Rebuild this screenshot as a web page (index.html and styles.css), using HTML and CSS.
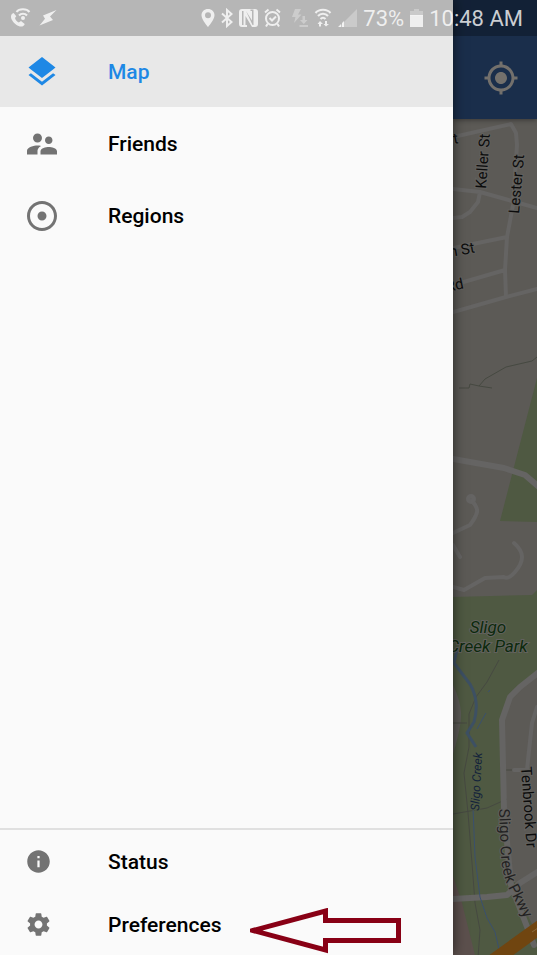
FILE: index.html
```html
<!DOCTYPE html>
<html lang="en">
<head>
<meta charset="utf-8">
<meta name="viewport" content="width=device-width, initial-scale=1">
<title>Map</title>
<link rel="stylesheet" href="styles.css">
</head>
<body>
<div class="app">
  <header class="status-bar">
    <div class="status-group">
      <svg class="icon-call" width="22" height="20" viewBox="0 0 22 20" aria-hidden="true">
        <path class="solid" d="M3.600 5C.8 6 .3 9 2 12c2.200 4 6 6.500 9 6.500 2 0 3.500-1.300 3.700-2.600L11 13l-2.200 1.500C7 13.500 5.500 12 5 10l1.300-1.800z"/>
        <path class="line w2" d="M6.500 4C9 .6 16.500.3 19.500 4M9 7.500c2-2.400 6-2.400 8 0"/>
        <circle class="solid" cx="13" cy="10" r="2"/>
      </svg>
      <svg width="18" height="18" viewBox="0 0 18 18" aria-hidden="true"><path class="solid" d="M17.500 1 4 6.500l2 3.200L.5 16.500 14 11l-3-3.500z"/></svg>
    </div>
    <div class="status-group compact">
      <svg width="14" height="20" viewBox="0 0 14 20" aria-hidden="true"><path class="solid" fill-rule="evenodd" d="M7 1C3.300 1 .5 3.700.5 7.300.5 12 7 19 7 19s6.500-7 6.500-11.700C13.500 3.700 10.700 1 7 1zm0 3.300a3 3 0 1 1 0 6 3 3 0 0 1 0-6z"/></svg>
      <svg width="12" height="20" viewBox="0 0 12 20" aria-hidden="true"><path class="line w2" d="m1 5.500 9.500 8.500L6 18V2l4.500 4L1 14.500"/></svg>
      <svg width="19" height="20" viewBox="0 0 19 20" aria-hidden="true"><path class="solid" fill-rule="evenodd" d="M3 1h13q3 0 3 3v12q0 3-3 3h-3L6.500 8v9H8v2H3q-3 0-3-3V4q0-3 3-3zm0 2v14h1.500V3zM7 3l6 9.500V3h-1.500V1.500h3V17h-1z"/></svg>
      <svg width="17" height="20" viewBox="0 0 17 20" aria-hidden="true"><circle class="line w2" cx="8.500" cy="10.500" r="6.500"/><path class="line w2" d="m1 4.500 3.500-3M16 4.500l-3.500-3M3.500 16 2 18.500M13.500 16l1.500 2.500M5.500 10l2.500 2.500L12 8.500"/></svg>
      <svg class="dim icon-flash" width="17" height="20" viewBox="0 0 17 20" aria-hidden="true"><path class="solid" d="M4 1h6L7 6.500h3.500L3 15l1.500-6H1zM11.500 8h2.500v4h2.500L12.800 16 9 12h2.500zM8.500 17H17v2H8.500z"/></svg>
      <svg class="icon-wifi" width="18" height="20" viewBox="0 0 18 20" aria-hidden="true"><path class="line w2" d="M1.500 5C5 .8 13 .8 16.500 5M4 8c2.500-3 7.500-3 10 0M6.500 11c1.500-1.700 3.500-1.700 5 0"/><path class="solid" d="M6 13l3 3H7v2.500H5V16H3.500zM12 18.500 9.500 16h1.500v-3h2v3h2z"/></svg>
      <svg width="19" height="20" viewBox="0 0 19 20" aria-hidden="true"><path class="solid faint" d="M19 1v18H1z"/><path class="solid" d="M0 19l3-3v3zM4 19v-4l2-2v6z"/></svg>
      <span class="battery-level">73%</span>
      <svg width="13" height="20" viewBox="0 0 13 20" aria-hidden="true"><path class="solid faint" d="M4 1h5v2h4v5H0V3h4z"/><path class="solid" d="M0 7h13v12H0z"/></svg>
      <time>10:48 AM</time>
    </div>
  </header>

  <nav class="drawer" aria-label="Main">
    <div class="menu">
      <a class="item active" href="#map">
        <svg viewBox="0 0 24 24" aria-hidden="true"><path d="M11.990 18.540l-7.370-5.730L3 14.070l9 7 9-7-1.630-1.270-7.380 5.740zM12 16l7.360-5.730L21 9l-9-7-9 7 1.630 1.270L12 16z"/></svg>
        <span>Map</span>
      </a>
      <a class="item" href="#friends">
        <svg viewBox="0 0 24 24" aria-hidden="true"><path d="M16.500 12c1.380 0 2.490-1.120 2.490-2.500S17.880 7 16.500 7 14 8.120 14 9.500s1.120 2.500 2.500 2.500zM9 11c1.660 0 2.990-1.340 2.990-3S10.660 5 9 5 6 6.340 6 8s1.340 3 3 3zm7.500 3c-1.830 0-5.500.92-5.500 2.750V19h11v-2.250c0-1.830-3.670-2.750-5.500-2.750zM9 13c-2.330 0-7 1.170-7 3.500V19h7v-2.250c0-.85.33-2.340 2.370-3.470C10.500 13.100 9.660 13 9 13z"/></svg>
        <span>Friends</span>
      </a>
      <a class="item" href="#regions">
        <svg viewBox="0 0 24 24" aria-hidden="true"><path fill-rule="evenodd" d="M12 2C6.490 2 2 6.490 2 12s4.490 10 10 10 10-4.490 10-10S17.510 2 12 2zm0 18c-4.410 0-8-3.590-8-8s3.590-8 8-8 8 3.590 8 8-3.590 8-8 8zm3-8c0 1.660-1.340 3-3 3s-3-1.340-3-3 1.340-3 3-3 3 1.340 3 3z"/></svg>
        <span>Regions</span>
      </a>
    </div>
    <div class="menu secondary">
      <a class="item" href="#status">
        <svg viewBox="0 0 24 24" aria-hidden="true"><path d="M12 2C6.480 2 2 6.480 2 12s4.480 10 10 10 10-4.480 10-10S17.520 2 12 2zm1 15h-2v-6h2v6zm0-8h-2V7h2v2z"/></svg>
        <span>Status</span>
      </a>
      <a class="item" href="#preferences">
        <svg viewBox="0 0 24 24" aria-hidden="true"><path d="M19.430 12.980c.04-.32.07-.64.07-.98s-.03-.66-.07-.98l2.110-1.650c.19-.15.24-.42.12-.64l-2-3.460c-.12-.22-.39-.3-.61-.22l-2.490 1c-.52-.4-1.080-.73-1.690-.98l-.38-2.650C14.460 2.180 14.250 2 14 2h-4c-.25 0-.46.18-.49.42l-.38 2.650c-.61.25-1.170.59-1.690.98l-2.490-1c-.23-.09-.49 0-.61.22l-2 3.460c-.13.22-.07.49.12.64l2.110 1.650c-.04.32-.07.65-.07.98s.03.66.07.98l-2.110 1.650c-.19.15-.24.42-.12.64l2 3.460c.12.22.39.3.61.22l2.490-1c.52.4 1.080.73 1.690.98l.38 2.650c.03.24.24.42.49.42h4c.25 0 .46-.18.49-.42l.38-2.650c.61-.25 1.170-.59 1.690-.98l2.490 1c.23.09.49 0 .61-.22l2-3.460c.12-.22.07-.49-.12-.64l-2.110-1.650zM12 15.500c-1.930 0-3.500-1.570-3.500-3.500s1.570-3.500 3.500-3.500 3.500 1.570 3.500 3.500-1.570 3.500-3.500 3.500z"/></svg>
        <span>Preferences</span>
      </a>
      <svg class="pointer" viewBox="250 908 152 46" aria-hidden="true"><path d="M253 930.500 325.500 911v9.500h73v20h-73v9.500z"/></svg>
    </div>
  </nav>

  <main class="content">
    <div class="toolbar">
      <button class="locate" type="button" aria-label="My location">
        <svg viewBox="0 0 24 24" aria-hidden="true"><path fill-rule="evenodd" d="M12 8c-2.210 0-4 1.790-4 4s1.790 4 4 4 4-1.790 4-4-1.790-4-4-4zm8.940 3c-.46-4.170-3.770-7.480-7.940-7.940V1h-2v2.060C6.830 3.520 3.520 6.830 3.060 11H1v2h2.060c.46 4.170 3.770 7.480 7.940 7.940V23h2v-2.060c4.170-.46 7.480-3.770 7.940-7.940H23v-2h-2.060zM12 19c-3.870 0-7-3.130-7-7s3.130-7 7-7 7 3.130 7 7-3.130 7-7 7z"/></svg>
      </button>
    </div>
    <div class="map">
      <svg viewBox="453 119 84 836" preserveAspectRatio="xMinYMin slice" role="img" aria-label="Street map around Sligo Creek Park">
        <path class="park" d="M537 378 500 521l37 1zM453 597l79-2 5-5v365h-84z"/>
        <path class="land" d="M453 685q7 14 8 27t-8 42zM537 675l-18 15-10 12-6 18 1 84 5 60 16 46 12 24z"/>
        <path class="pink" d="M453 876 462 903l13 52h-22z"/>
        <path class="trail" d="M459 388h10l1-4 9 2 13 2M479 386l6-7 21-12 26-6 5-4M499 660l-12 22-11 15-7 17v33l-5 26 4 40 4 50 3 40 5 27-2 28M453 723h14M453 814l34-6 20-9M503 770h14"/>
        <g class="road">
          <path d="M453 137l58-13 5 9 1 12-4 60-6 32-2 33 1 27M453 189l27 3 57 16M480 192l-2 10-8 10-8 5-9 1M453 248l54-11M453 285l52-15M453 312l53-15 31-8"/>
          <path d="M471 500q7 7 6 12t-7 13l-17 8M453 545l7 12M514 543q8 7 8 14t-7 15-11 5l-19 1-21 12-11-3"/>
          <circle cx="471" cy="499" r="3"/>
          <path d="M537 707l-5 16-4 37-1 10h-13"/>
        </g>
        <g class="road wide">
          <path d="M453 459l51 9 21 7 14 12M539 672l-19 15-10 10-8 23 2 90 7 75 23 60M453 899l34-2 20-2 13-12 19-12"/>
        </g>
        <path class="stream" d="M457 650l-3 13 16 21q5 9 6 18t-2 20l-7 11 9 14"/>
        <path class="brook" d="M490 690l-2 2M486 713l-9 16M473 808l2 49 5 40 7 21 8 14 4 17"/>
        <path class="highway" d="M488 956l50-36v17l-26 19z"/>
        <path class="lane" d="M532 932l6-4"/>
        <g class="label">
          <text x="454" y="144" transform="rotate(-10 454 144)">t</text>
          <text x="486" y="189" transform="rotate(-86 486 189)">Keller St</text>
          <text x="519" y="214" transform="rotate(-85 519 214)">Lester St</text>
          <text x="450" y="257" transform="rotate(-10 450 257)">n St</text>
          <text x="447" y="292" transform="rotate(-12 447 292)">Rd</text>
          <text x="521" y="767" transform="rotate(86 521 767)">Tenbrook Dr</text>
        </g>
        <path id="parkway" fill="none" d="M499 809l2 46q1 22 10 38l25 48"/>
        <text class="label soft"><textPath href="#parkway">Sligo Creek Pkwy</textPath></text>
        <g class="label place">
          <text x="488" y="633">Sligo</text>
          <text x="488" y="652">Creek Park</text>
        </g>
        <text class="label water" x="479" y="811" transform="rotate(-87 479 811)">Sligo Creek</text>
      </svg>
    </div>
  </main>
</div>
</body>
</html>
```
FILE: styles.css
```css
* { box-sizing: border-box; }

body {
  margin: 0;
  font-family: Roboto, "Liberation Sans", sans-serif;
}

svg { display: block; flex: none; }

.app {
  position: relative;
  display: grid;
  grid-template-columns: minmax(0, 1fr) 84px;
  min-height: 100vh;
  overflow: hidden;
}

/* Translucent system bar lying over the drawer and the toolbar */
.status-bar {
  position: absolute;
  z-index: 3;
  top: 0;
  left: 0;
  right: 0;
  height: 36px;
  padding: 0 14px 0 10px;
  display: flex;
  align-items: center;
  justify-content: space-between;
  background: rgba(0, 0, 0, 0.27);
  color: rgba(255, 255, 255, 0.78);
  font-size: 22px;
  line-height: 34px;
  white-space: nowrap;
}

.status-group { display: flex; align-items: center; gap: 7px; }
.compact { gap: 6px; }
.battery-level, time { padding-top: 2px; }
.solid { fill: currentColor; }
.line { fill: none; stroke: currentColor; }
.w2 { stroke-width: 2; }
.faint { opacity: 0.35; }
.dim { opacity: 0.4; }
.icon-flash { margin-left: 4px; }

.drawer {
  position: relative;
  z-index: 2;
  display: flex;
  flex-direction: column;
  justify-content: space-between;
  padding-top: 36px;
  background: #fafafa;
  box-shadow: 0 0 12px rgba(0, 0, 0, 0.6);
}

.menu { display: grid; gap: 1px; }

.item {
  display: grid;
  grid-template-columns: 84px 1fr;
  align-items: center;
  height: 71px;
  padding-left: 24px;
  color: #000;
  font-size: 21px;
  font-weight: 500;
  text-decoration: none;
}

.item span { padding-top: 1px; }
.item svg { width: 36px; height: 36px; fill: #737373; }
.item.active { background: #e8e8e8; color: #1e88e5; }
.item.active svg { fill: #1e88e5; }

.secondary { position: relative; border-top: 2px solid #e0e0e0; }
.secondary .item { height: 62px; }
.secondary .item svg { width: 27px; height: 27px; margin-left: 1px; }

.pointer {
  position: absolute;
  left: 250px;
  bottom: 1px;
  width: 152px;
  height: 46px;
  fill: none;
  stroke: #880015;
  stroke-width: 5;
}

.content { display: flex; flex-direction: column; }

.toolbar {
  position: relative;
  z-index: 1;
  display: flex;
  justify-content: center;
  height: 119px;
  padding: 36px 0 0 12px;
  background: #1a2e4b;
  box-shadow: 0 1px 5px rgba(0, 0, 0, 0.4);
}

.locate {
  display: grid;
  place-items: center;
  padding: 0;
  border: 0;
  background: none;
}

.locate svg { width: 36px; height: 36px; fill: #73706c; }

.map { flex: 1; min-height: 0; background: #5c5a56; }
.map > svg { width: 100%; height: 836px; }

.park { fill: #4f5942; }
.land { fill: #5c5a56; }
.pink { fill: #5c504d; }
.road { fill: none; stroke: #656463; stroke-width: 4; stroke-linejoin: round; stroke-linecap: round; }
.wide { stroke-width: 6; }
.trail { fill: none; stroke: #464941; stroke-width: 1; }
.stream { fill: none; stroke: #3d5063; stroke-width: 3; }
.brook { fill: none; stroke: #3a506e; stroke-width: 1; }
.highway { fill: #704510; }
.lane { stroke: #8a6a3c; stroke-width: 1; }

.label {
  fill: #0c0c0c;
  stroke: #62615e;
  stroke-width: 2;
  paint-order: stroke;
  font-size: 15px;
}

.soft { fill: #222; }
.place { fill: #0c2a0c; font-size: 17px; font-style: italic; text-anchor: middle; }
.water { fill: #14233b; stroke: #4f5942; font-size: 12px; font-style: italic; }
```
